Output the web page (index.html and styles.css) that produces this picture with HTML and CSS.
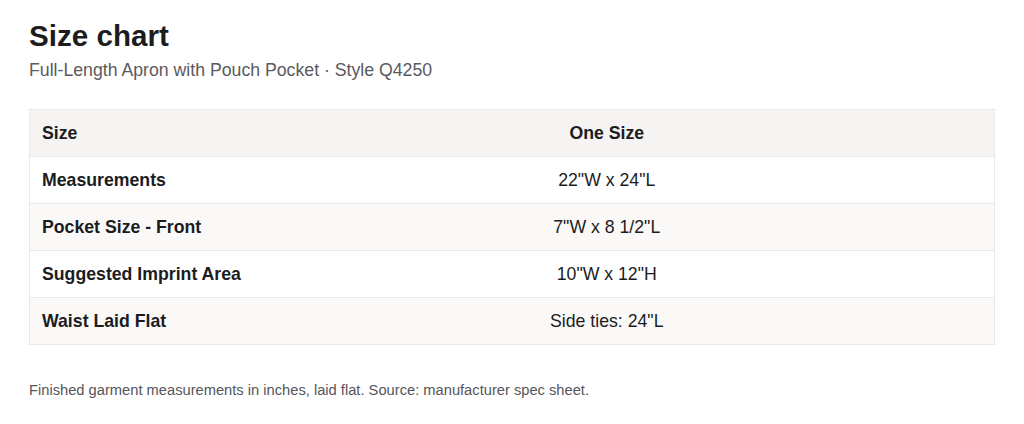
FILE: index.html
```html
<!DOCTYPE html>
<html lang="en">
<head>
<meta charset="utf-8">
<title>Size chart</title>
<link rel="stylesheet" href="styles.css">
</head>
<body>
<main class="page">
  <header class="head">
    <h1 class="title">Size chart</h1>
    <p class="subtitle">Full-Length Apron with Pouch Pocket · Style Q4250</p>
  </header>
  <table class="chart">
    <colgroup>
      <col class="col-label">
      <col class="col-value">
    </colgroup>
    <thead>
      <tr class="row row-head">
        <th class="cell label">Size</th>
        <th class="cell value">One Size</th>
      </tr>
    </thead>
    <tbody>
      <tr class="row">
        <th class="cell label">Measurements</th>
        <td class="cell value">22"W x 24"L</td>
      </tr>
      <tr class="row row-alt">
        <th class="cell label">Pocket Size - Front</th>
        <td class="cell value">7"W x 8 1/2"L</td>
      </tr>
      <tr class="row">
        <th class="cell label">Suggested Imprint Area</th>
        <td class="cell value">10"W x 12"H</td>
      </tr>
      <tr class="row row-alt">
        <th class="cell label">Waist Laid Flat</th>
        <td class="cell value">Side ties: 24"L</td>
      </tr>
    </tbody>
  </table>
  <p class="note">Finished garment measurements in inches, laid flat. Source: manufacturer spec sheet.</p>
</main>
</body>
</html>
```
FILE: styles.css
```css
* { box-sizing: border-box; }
html, body { margin: 0; padding: 0; background: #ffffff; }
body {
  font-family: "Liberation Sans", Arial, Helvetica, sans-serif;
  color: #1d1d1f;
}
.page {
  padding: 19px 29px 20px;
}
.head { margin-bottom: 28px; }
.title {
  margin: 0;
  font-size: 29.6px;
  line-height: 34px;
  font-weight: 700;
  color: #1c1c1e;
}
.subtitle {
  margin: 6px 0 0;
  font-size: 17.7px;
  line-height: 22px;
  color: #5a5a5e;
}
.chart {
  width: 100%;
  table-layout: fixed;
  border-collapse: collapse;
  border: 1px solid #e9e9ec;
  font-size: 17.7px;
}
.col-label { width: 190px; }
.row { height: 47px; border-top: 1px solid #e9e9ec; }
.row-head { background: #f5f4f2; border-top: none; }
.row-alt { background: #faf9f8; }
.cell { padding: 0 12px; vertical-align: middle; white-space: nowrap; }
.label {
  text-align: left;
  font-weight: 700;
  color: #1c1c1e;
}
.value {
  text-align: center;
  font-weight: 400;
  color: #1c1c1e;
}
.row-head .value { font-weight: 700; }
.note {
  margin: 35px 0 0;
  font-size: 14.7px;
  line-height: 20px;
  color: #55555a;
}
```
